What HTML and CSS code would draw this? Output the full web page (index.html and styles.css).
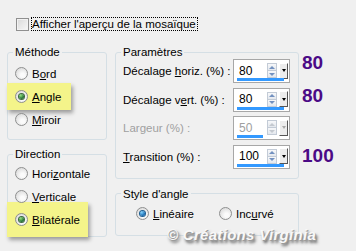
FILE: index.html
```html
<!DOCTYPE html>
<html lang="fr">
<head>
<meta charset="UTF-8">
<title>Mosaïque - Angle</title>
<link rel="stylesheet" href="styles.css">
</head>
<body>

<div class="dialog">
  <label class="check-row">
    <span class="checkbox"></span>
    <span class="focus">Afficher l'aperçu de la mosaïque</span>
  </label>

  <div class="panes">
    <div class="pane-left">
      <fieldset class="group method">
        <legend>Méthode</legend>
        <div class="option"><span class="radio"></span><span>B<u>o</u>rd</span></div>
        <div class="option marked"><span class="radio on"></span><span><u>A</u>ngle</span></div>
        <div class="option"><span class="radio"></span><span><u>M</u>iroir</span></div>
      </fieldset>

      <fieldset class="group direction">
        <legend>Direction</legend>
        <div class="option"><span class="radio"></span><span>Hori<u>z</u>ontale</span></div>
        <div class="option"><span class="radio"></span><span><u>V</u>erticale</span></div>
        <div class="option marked marked-tall"><span class="radio on"></span><span><u>B</u>ilatérale</span></div>
      </fieldset>
    </div>

    <div class="pane-right">
      <fieldset class="group params">
        <legend>Paramètres</legend>

        <div class="param">
          <span class="param-label">Décalage <u>h</u>oriz. (%) :</span>
          <div class="spin">
            <div class="spin-main">
              <span class="spin-value">80</span>
              <span class="spin-arrows"><i class="up"></i><i class="down"></i></span>
              <span class="spin-drop"></span>
            </div>
            <div class="spin-bar"></div>
          </div>
          <span class="note note-high">80</span>
        </div>

        <div class="param">
          <span class="param-label">Décalage v<u>e</u>rt. (%) :</span>
          <div class="spin">
            <div class="spin-main">
              <span class="spin-value">80</span>
              <span class="spin-arrows"><i class="up"></i><i class="down"></i></span>
              <span class="spin-drop"></span>
            </div>
            <div class="spin-bar"></div>
          </div>
          <span class="note note-mid">80</span>
        </div>

        <div class="param disabled">
          <span class="param-label">Lar<u>g</u>eur (%) :</span>
          <div class="spin">
            <div class="spin-main">
              <span class="spin-value">50</span>
              <span class="spin-arrows"><i class="up"></i><i class="down"></i></span>
              <span class="spin-drop"></span>
            </div>
            <div class="spin-bar half"></div>
          </div>
        </div>

        <div class="param">
          <span class="param-label"><u>T</u>ransition (%) :</span>
          <div class="spin">
            <div class="spin-main">
              <span class="spin-value">100</span>
              <span class="spin-arrows"><i class="up"></i><i class="down"></i></span>
              <span class="spin-drop"></span>
            </div>
            <div class="spin-bar"></div>
          </div>
          <span class="note note-low">100</span>
        </div>
      </fieldset>

      <fieldset class="group corner">
        <legend>Style d'angle</legend>
        <div class="options-row">
          <div class="option"><span class="radio on blue"></span><span><u>L</u>inéaire</span></div>
          <div class="option"><span class="radio"></span><span>Inc<u>u</u>rvé</span></div>
        </div>
      </fieldset>
    </div>
  </div>

  <div class="watermark">© Créations Virginia</div>
</div>

</body>
</html>
```

FILE: styles.css
```css
body {
  margin: 0;
  background-color: #f0f0f0;
  font-family: "Liberation Sans", Arial, sans-serif;
  font-size: 11.5px;
  color: #000;
}

.dialog {
  position: relative;
  height: 251px;
  padding-top: 17px;
  box-sizing: border-box;
  overflow: hidden;
}

u {
  text-underline-offset: 1px;
}

/* top checkbox */
.check-row {
  display: flex;
  align-items: center;
  gap: 2px;
  width: fit-content;
  margin-left: 16px;
}

.checkbox {
  width: 13px;
  height: 13px;
  box-sizing: border-box;
  border: 1px solid #8f8f8f;
  background: linear-gradient(135deg, #d9d9d9, #f7f7f7);
  box-shadow: inset 0 0 0 1px #f2f2f2;
}

.focus {
  border: 1px dotted #000;
  line-height: 12px;
  padding-right: 1px;
}

/* columns */
.panes {
  display: flex;
  gap: 8px;
  margin: 14px 0 0 7px;
}

.pane-left {
  width: 100px;
  display: flex;
  flex-direction: column;
  gap: 7px;
}

.pane-right {
  width: 184px;
  display: flex;
  flex-direction: column;
  gap: 8px;
}

/* group boxes */
.group {
  margin: 0;
  min-inline-size: 0;
  border: 1px solid #d5dfe5;
  border-radius: 3px;
  padding: 3px 7px 8px;
}

.group legend {
  padding: 0 2px;
  margin-left: -2px;
  line-height: 14px;
}

.direction {
  padding-top: 1px;
  padding-bottom: 5px;
}

.params {
  padding: 0 8px 9px 7px;
}

.corner {
  padding-top: 1.5px;
  padding-bottom: 9.5px;
}

/* radio options */
.option {
  display: flex;
  align-items: center;
  gap: 4px;
  height: 23px;
  width: fit-content;
}

.options-row {
  display: flex;
  gap: 25px;
  margin-left: 13px;
}

.radio {
  width: 13px;
  height: 13px;
  box-sizing: border-box;
  border-radius: 50%;
  border: 1px solid #8e8f8f;
  background: radial-gradient(circle at 60% 65%, #fbfbfb 20%, #d6d6d6 90%);
  display: flex;
  align-items: center;
  justify-content: center;
}

.radio.on::after {
  content: "";
  width: 5px;
  height: 5px;
  border-radius: 50%;
  background: radial-gradient(circle at 35% 30%, #8fe07d, #14602a 75%);
  box-shadow: 0 0 0 1px #3d6b3a;
}

.radio.blue::after {
  background: radial-gradient(circle at 35% 30%, #7fd3ff, #0b5ea8 75%);
  box-shadow: 0 0 0 1px #1d5f92;
}

.marked {
  background-color: #f4f48a;
  margin: -2px 0 -2px -8px;
  padding: 2px 10px 2px 8px;
  box-shadow: 2px 3px 4px rgba(0, 0, 0, 0.35);
}

.marked-tall {
  margin-top: -6px;
  margin-bottom: -6px;
  padding-top: 6px;
  padding-bottom: 6px;
  padding-right: 8px;
}

/* parameter rows */
.param {
  display: flex;
  align-items: center;
  height: 24px;
}

.param + .param {
  margin-top: 4.5px;
}

.param-label {
  flex: 1;
  white-space: nowrap;
}

.disabled {
  color: #a0a0a0;
}

.spin {
  flex-shrink: 0;
  width: 57px;
  height: 24px;
  box-sizing: border-box;
  border: 1px solid #a7a7a7;
  background-color: #fff;
  padding: 3px 1px 1px 3px;
  display: flex;
  flex-direction: column;
}

.spin-main {
  display: flex;
  align-items: center;
  height: 15px;
}

.spin-value {
  flex: 1;
  padding-left: 2px;
  font-size: 12px;
}

.spin-arrows {
  width: 10px;
  height: 15px;
  display: flex;
  flex-direction: column;
}

.spin-arrows i {
  flex: 1;
  box-sizing: border-box;
  border: 1px solid #c3cbd6;
  background: linear-gradient(#f7f8fa, #e4e8ee);
  display: flex;
  align-items: center;
  justify-content: center;
}

.spin-arrows i + i {
  margin-top: -1px;
}

.spin-arrows i::after {
  content: "";
  border-left: 3px solid transparent;
  border-right: 3px solid transparent;
}

.spin-arrows .up::after {
  border-bottom: 3px solid #7391c0;
}

.spin-arrows .down::after {
  border-top: 3px solid #7391c0;
}

.spin-drop {
  width: 9px;
  height: 16px;
  margin-left: 2px;
  box-sizing: border-box;
  border: 1px solid;
  border-color: #fff #555 #555 #fff;
  background-color: #ececec;
  display: flex;
  align-items: center;
  justify-content: center;
}

.spin-drop::after {
  content: "";
  border-left: 2.5px solid transparent;
  border-right: 2.5px solid transparent;
  border-top: 3px solid #000;
}

.spin-bar {
  height: 3px;
  width: 47px;
  background-color: #3399ff;
}

.spin-bar.half {
  width: 26px;
}

.disabled .spin-arrows .up::after {
  border-bottom-color: #c4c9d0;
}

.disabled .spin-arrows .down::after {
  border-top-color: #c4c9d0;
}

.disabled .spin-drop::after {
  border-top-color: #a8a8a8;
}

/* purple annotations */
.note {
  align-self: flex-start;
  width: 0;
  margin-left: 12px;
  margin-right: -12px;
  white-space: nowrap;
  font: bold 19px/19px "Liberation Sans", Arial, sans-serif;
  color: #4b0a86;
}

.note-high {
  margin-top: -6.5px;
}

.note-mid {
  margin-top: -2px;
}

.note-low {
  margin-top: 1px;
}

/* watermark stamped over the dialog */
.watermark {
  position: absolute;
  left: 167px;
  top: 226px;
  font: italic bold 15px "Liberation Sans", Arial, sans-serif;
  letter-spacing: 0.3px;
  color: #f8f8f8;
  text-shadow: 1px 1px 0 #9a9a9a, 2px 3px 3px #555;
}
```
